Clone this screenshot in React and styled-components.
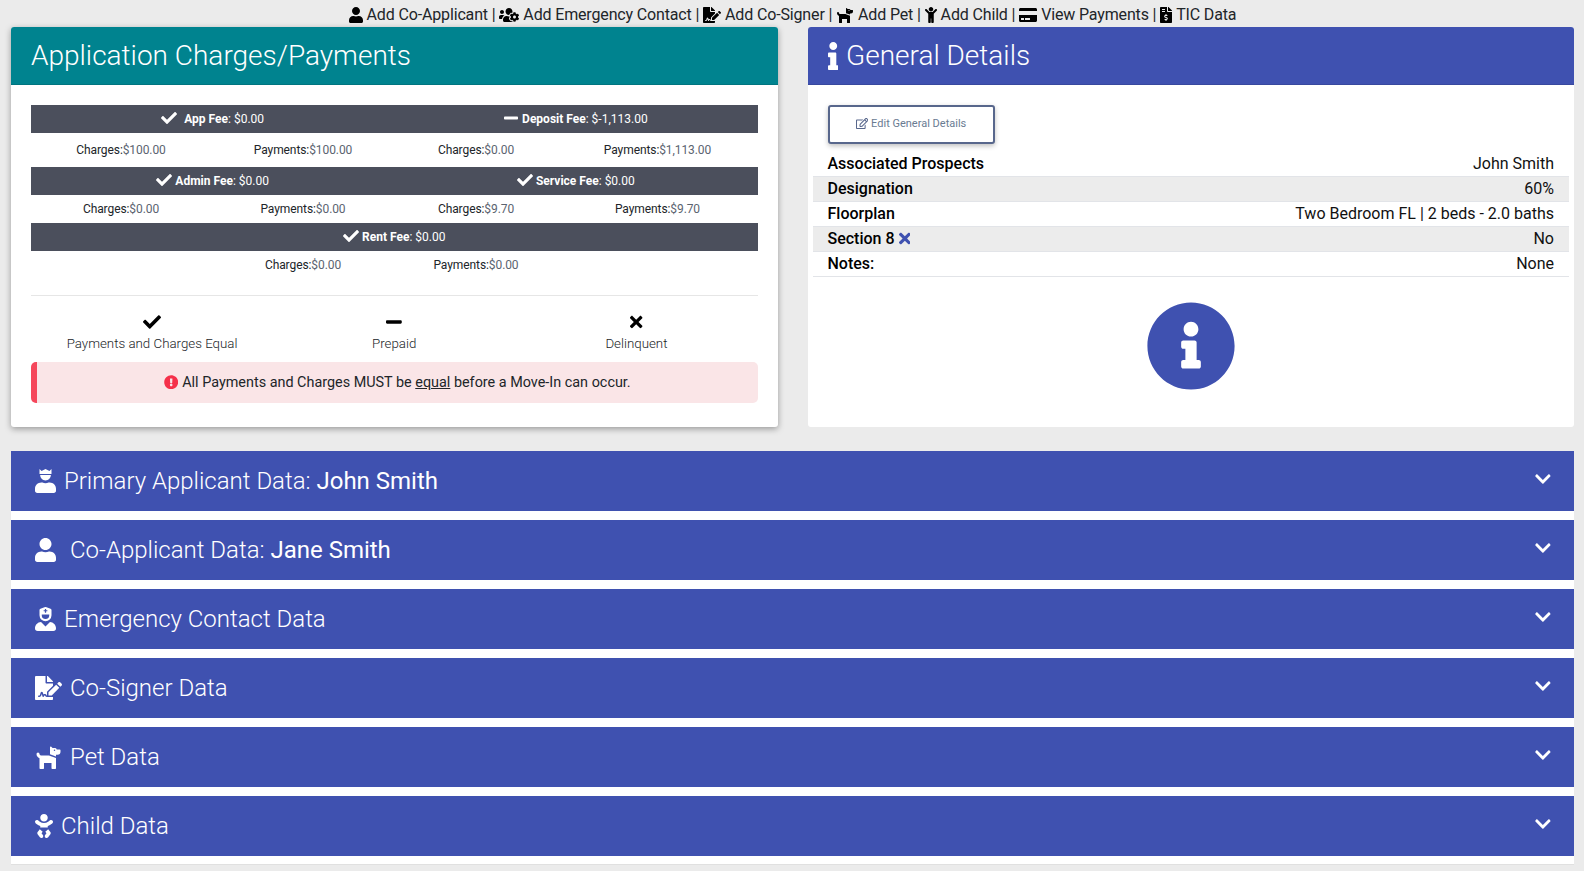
import React from "react";
import styled, { createGlobalStyle } from "styled-components";
import {
  FaUser, FaUsersCog, FaFileSignature, FaDog, FaChild, FaCreditCard, FaFileInvoiceDollar,
  FaCheck, FaMinus, FaTimes, FaExclamationCircle, FaInfo, FaInfoCircle, FaRegEdit,
  FaChevronDown, FaUserNurse, FaBaby,
} from "react-icons/fa";

const Global = createGlobalStyle`
  html, body { margin: 0; padding: 0; background: #ebebeb; }
  body { font-family: Roboto, "Liberation Sans", sans-serif; color: #212529; font-size: 16px; }
  * { box-sizing: border-box; }
`;

/* Font Awesome glyphs are as wide as their own artwork, not square */
const glyph = (Icon, ratio) => styled(Icon)`
  width: ${ratio}em;
  height: 1em;
`;
const UserIcon = glyph(FaUser, 0.875);
const UsersCogIcon = glyph(FaUsersCog, 1.25);
const SignatureIcon = glyph(FaFileSignature, 1.125);
const DogIcon = glyph(FaDog, 1.125);
const ChildIcon = glyph(FaChild, 0.75);
const CardIcon = glyph(FaCreditCard, 1.125);
const InvoiceIcon = glyph(FaFileInvoiceDollar, 0.75);
const CheckIcon = glyph(FaCheck, 1);
const MinusIcon = glyph(FaMinus, 0.875);
const TimesIcon = glyph(FaTimes, 0.6875);
const InfoIcon = glyph(FaInfo, 0.375);
const EditIcon = glyph(FaRegEdit, 1.125);
const NurseIcon = glyph(FaUserNurse, 0.875);
const BabyIcon = glyph(FaBaby, 0.75);

const Page = styled.div`
  width: 1584px;
  height: 871px;
  overflow: hidden;
  padding: 0 10px 0 11px;
`;
const Toolbar = styled.div`
  height: 27px;
  padding-top: 2px;
  display: flex;
  justify-content: center;
  align-items: center;
  white-space: pre;
  font-size: 16px;
  letter-spacing: -0.15px;
  font-weight: 400;
  color: #212529;
  svg { color: #000; font-size: 16px; margin-right: 4px; }
`;
const Columns = styled.div`
  display: grid;
  grid-template-columns: 1fr 1fr;
  gap: 30px;
`;
const Card = styled.section`
  height: 400px;
  background: #fff;
  border-radius: 3px;
  box-shadow: ${(p) => (p.$shadow ? "0 2px 6px rgba(0,0,0,.35)" : "none")};
  overflow: hidden;
`;
const CardHead = styled.h2`
  margin: 0;
  height: 58px;
  padding-left: 20px;
  display: flex;
  align-items: center;
  gap: 8px;
  background: ${(p) => p.$bg};
  color: #fff;
  font-size: 28px;
  font-weight: 300;
  border-bottom: 1px solid rgba(0,0,0,.1);
  svg { font-size: 28px; }
`;
const ChargesBody = styled.div`
  padding: 20px 20px 0;
`;
const FeeBar = styled.div`
  height: 28px;
  padding-bottom: 2px;
  display: grid;
  grid-template-columns: ${(p) => (p.$single ? "1fr" : "1fr 1fr")};
  align-items: center;
  background: #4b4f5c;
  color: #fff;
  font-size: 12px;
  text-align: center;
`;
const FeeTitle = styled.div`
  b { font-weight: 700; }
  svg { font-size: 16px; vertical-align: -3px; margin-right: ${(p) => p.$gap}px; }
`;
const AmountRow = styled.div`
  height: ${(p) => p.$h}px;
  display: grid;
  grid-template-columns: 180px 184px 162px 201px;
  align-items: center;
  text-align: center;
  font-size: 12px;
  letter-spacing: -0.09px;
  color: #212529;
  span { color: #5b6470; }
`;
const Amount = styled.div`
  grid-column: ${(p) => p.$col};
`;
const Rule = styled.hr`
  margin: 16px 0 0;
  border: 0;
  border-top: 1px solid #e6e6e6;
`;
const Legend = styled.div`
  display: grid;
  grid-template-columns: repeat(3, 1fr);
  padding-top: 17px;
  text-align: center;
`;
const LegendItem = styled.div`
  display: flex;
  flex-direction: column;
  align-items: center;
  font-size: 13.3px;
  font-weight: 300;
  color: #212529;
  svg { font-size: 18px; color: #000; margin-bottom: 5px; }
`;
const Alert = styled.div`
  margin-top: 11px;
  height: 41px;
  padding-bottom: 1px;
  display: flex;
  align-items: center;
  justify-content: center;
  white-space: pre;
  background: #fae5e7;
  border-left: 6px solid #f5475b;
  border-radius: 5px;
  font-size: 14.4px;
  color: #212529;
  svg { color: #f5304a; font-size: 14.4px; margin-right: 4px; }
  u { text-decoration: underline; }
`;
const DetailsBody = styled.div`
  padding: 20px 5px 0;
`;
const EditButton = styled.button`
  display: flex;
  align-items: center;
  justify-content: center;
  gap: 3px;
  width: 167px;
  height: 39px;
  margin: 0 0 8px 15px;
  padding: 0 0 2px;
  background: #fff;
  border: 2px solid #58678c;
  border-radius: 3px;
  box-shadow: 0 2px 5px rgba(0,0,0,.25);
  font: 400 11px Roboto, sans-serif;
  color: #6a7b92;
  svg { font-size: 11px; color: #58678c; }
`;
const DetailRow = styled.div`
  height: 25px;
  padding: 0 15px 2px;
  display: flex;
  align-items: center;
  justify-content: space-between;
  font-size: 16px;
  color: #111;
  background: ${(p) => (p.$alt ? "#ececec" : "#fff")};
  border-bottom: 1px solid #e2e4e8;
  b { font-weight: 500; color: #000; }
  svg { color: #3f51b0; font-size: 17px; vertical-align: -3px; margin-left: 4px; }
`;
const InfoBadge = styled.div`
  display: flex;
  justify-content: center;
  padding: 24px 0 0 0;
  color: #3f51b0;
  font-size: 90px;
  svg { display: block; }
`;
const Accordions = styled.div`
  margin-top: 24px;
  display: flex;
  flex-direction: column;
`;
const AccordionItem = styled.div`
  background: #fff;
  height: 69px;
  border-bottom: ${(p) => (p.$last ? "1px solid #e0e0e0" : "none")};
`;
const AccordionHead = styled.div`
  height: 60px;
  padding: 0 23px 0 24px;
  display: flex;
  align-items: center;
  justify-content: space-between;
  background: #3f51b0;
  color: #fff;
  font-size: 24px;
  font-weight: 300;
  b { font-weight: 400; }
`;
const HeadLabel = styled.div`
  display: flex;
  align-items: center;
  gap: ${(p) => p.$gap}px;
  white-space: pre;
  svg { font-size: 24px; display: block; }
`;
const Chevron = styled(FaChevronDown)`
  font-size: 18px;
  width: 0.875em;
  height: 1em;
  margin-top: -4px;
`;
const CrownSvg = styled.svg`
  width: 0.875em;
  height: 1em;
`;

const UserCrown = () => (
  <CrownSvg viewBox="0 0 448 512" fill="currentColor">
    <path d="M96 0l44 40L224 0l84 40 44-40v104H96z" />
    <path d="M110 130h228c0 64-50 116-114 116S110 194 110 130z" />
    <path d="M313 288h-24c-20 9-42 14-65 14s-45-5-65-14h-24C60 288 0 348 0 422v42c0 27 21 48 48 48h352c27 0 48-21 48-48v-42c0-74-60-134-135-134z" />
  </CrownSvg>
);

const top = [
  [UserIcon, "Add Co-Applicant"], [UsersCogIcon, "Add Emergency Contact"], [SignatureIcon, "Add Co-Signer"],
  [DogIcon, "Add Pet"], [ChildIcon, "Add Child"], [CardIcon, "View Payments"], [InvoiceIcon, "TIC Data"],
];

const Fee = ({ icon: Icon, gap, name, value }) => (
  <FeeTitle $gap={gap}><Icon /><b>{name}</b>: {value}</FeeTitle>
);
const Money = ({ col, label, value }) => (
  <Amount $col={col}>{label}:<span>{value}</span></Amount>
);

const rows = [
  ["Associated Prospects", "John Smith"],
  ["Designation", "60%"],
  ["Floorplan", "Two Bedroom FL | 2 beds - 2.0 baths"],
  ["Section 8", "No", true],
  ["Notes:", "None"],
];

const accordions = [
  { icon: <UserCrown />, gap: 8, label: "Primary Applicant Data: ", who: "John Smith" },
  { icon: <UserIcon />, gap: 14, label: "Co-Applicant Data: ", who: "Jane Smith" },
  { icon: <NurseIcon />, gap: 8, label: "Emergency Contact Data" },
  { icon: <SignatureIcon />, gap: 8, label: "Co-Signer Data" },
  { icon: <DogIcon />, gap: 8, label: "Pet Data" },
  { icon: <BabyIcon />, gap: 8, label: "Child Data" },
];

export default function App() {
  return (
    <Page>
      <Global />
      <Toolbar>
        {top.map(([Icon, t], i) => (
          <React.Fragment key={t}>
            <Icon />{t}{i < top.length - 1 ? " | " : ""}
          </React.Fragment>
        ))}
      </Toolbar>
      <Columns>
        <Card $shadow>
          <CardHead $bg="#00838f">Application Charges/Payments</CardHead>
          <ChargesBody>
            <FeeBar>
              <Fee icon={CheckIcon} gap={7} name="App Fee" value="$0.00" />
              <Fee icon={MinusIcon} gap={4} name="Deposit Fee" value="$-1,113.00" />
            </FeeBar>
            <AmountRow $h={34}>
              <Money col={1} label="Charges" value="$100.00" />
              <Money col={2} label="Payments" value="$100.00" />
              <Money col={3} label="Charges" value="$0.00" />
              <Money col={4} label="Payments" value="$1,113.00" />
            </AmountRow>
            <FeeBar>
              <Fee icon={CheckIcon} gap={3} name="Admin Fee" value="$0.00" />
              <Fee icon={CheckIcon} gap={3} name="Service Fee" value="$0.00" />
            </FeeBar>
            <AmountRow $h={28}>
              <Money col={1} label="Charges" value="$0.00" />
              <Money col={2} label="Payments" value="$0.00" />
              <Money col={3} label="Charges" value="$9.70" />
              <Money col={4} label="Payments" value="$9.70" />
            </AmountRow>
            <FeeBar $single>
              <Fee icon={CheckIcon} gap={3} name="Rent Fee" value="$0.00" />
            </FeeBar>
            <AmountRow $h={28}>
              <Money col={2} label="Charges" value="$0.00" />
              <Money col={3} label="Payments" value="$0.00" />
            </AmountRow>
            <Rule />
            <Legend>
              <LegendItem><CheckIcon />Payments and Charges Equal</LegendItem>
              <LegendItem><MinusIcon />Prepaid</LegendItem>
              <LegendItem><TimesIcon />Delinquent</LegendItem>
            </Legend>
            <Alert>
              <FaExclamationCircle />All Payments and Charges MUST be <u>equal</u> before a Move-In can occur.
            </Alert>
          </ChargesBody>
        </Card>
        <Card>
          <CardHead $bg="#3f51b0"><InfoIcon />General Details</CardHead>
          <DetailsBody>
            <EditButton><EditIcon />Edit General Details</EditButton>
            {rows.map(([k, v, x], i) => (
              <DetailRow key={k} $alt={i % 2 === 1}>
                <span><b>{k}</b>{x ? <TimesIcon /> : null}</span>
                <span>{v}</span>
              </DetailRow>
            ))}
            <InfoBadge><FaInfoCircle /></InfoBadge>
          </DetailsBody>
        </Card>
      </Columns>
      <Accordions>
        {accordions.map((a, i) => (
          <AccordionItem key={a.label} $last={i === accordions.length - 1}>
            <AccordionHead>
              <HeadLabel $gap={a.gap}>
                {a.icon}
                <span>{a.label}{a.who ? <b>{a.who}</b> : null}</span>
              </HeadLabel>
              <Chevron />
            </AccordionHead>
          </AccordionItem>
        ))}
      </Accordions>
    </Page>
  );
}
